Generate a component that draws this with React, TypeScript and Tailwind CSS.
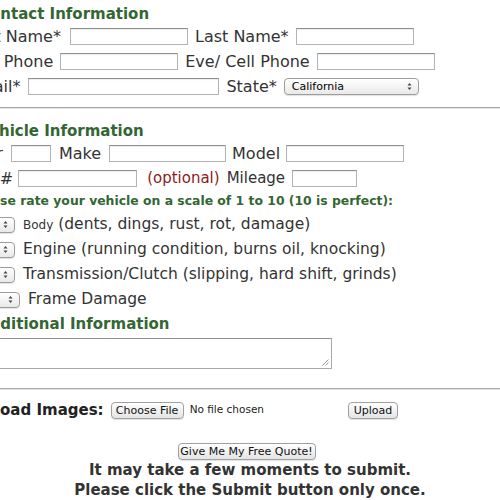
import clsx from "clsx";

function Field({ className }: { className: string }) {
  return <div className={clsx("h-[17px] shrink-0 border border-[#b4b4b4] border-t-[#8f8f8f] bg-white shadow-[inset_0_1px_1px_rgba(0,0,0,0.08)]", className)} />;
}

function Arrows() {
  return (
    <svg width="5" height="9" viewBox="0 0 5 9" className="shrink-0">
      <path d="M0.5 3.5L2.5 1L4.5 3.5Z" fill="#444" />
      <path d="M0.5 5.5L2.5 8L4.5 5.5Z" fill="#444" />
    </svg>
  );
}

function Select({ className, label }: { className: string; label?: string }) {
  return (
    <div className={clsx("flex shrink-0 items-center justify-between rounded-[4px] border border-[#9d9d9d] bg-gradient-to-b from-white to-[#e9e9e9] pl-[7px] pr-[6px] text-[11px] leading-none text-black shadow-[0_1px_1px_rgba(0,0,0,0.12)]", className)}>
      <span>{label}</span>
      <Arrows />
    </div>
  );
}

function Button({ className, children }: { className: string; children: React.ReactNode }) {
  return (
    <div className={clsx("flex h-[17px] shrink-0 items-center justify-center rounded-[4px] border border-[#a0a0a0] bg-gradient-to-b from-white to-[#e4e4e4] text-[11px] leading-none text-[#111] shadow-[0_1px_1px_rgba(0,0,0,0.12)]", className)}>
      {children}
    </div>
  );
}

function Divider() {
  return <div className="h-[2px] border-t border-[#a9a9a9] border-b border-b-[#e3e3e3]" />;
}

export default function App() {
  return (
    <div className="h-[500px] w-[500px] overflow-hidden bg-white font-['DejaVu_Sans',Verdana,sans-serif] text-[#333]">
      <div className="-ml-[33px] w-[566px]">
        <div className="flex h-[24px] items-center pl-[12px] pt-[4px] text-[15px] font-bold text-[#336633]">Contact Information</div>

        <div className="flex h-[25px] items-center text-[16px]">
          <span>First Name*</span>
          <Field className="ml-[9px] w-[118px]" />
          <span className="ml-[7px]">Last Name*</span>
          <Field className="ml-[7px] w-[118px]" />
        </div>
        <div className="flex h-[25px] items-center text-[16px]">
          <span>Day Phone</span>
          <Field className="ml-[7px] w-[118px]" />
          <span className="ml-[7px]">Eve/ Cell Phone</span>
          <Field className="ml-[7px] w-[118px]" />
        </div>
        <div className="flex h-[25px] items-center pl-[1px] text-[16px]">
          <span>Email*</span>
          <Field className="ml-[8px] w-[191px]" />
          <span className="ml-[7px]">State*</span>
          <Select className="ml-[7px] h-[17px] w-[135px]" label="California" />
        </div>

        <div className="mt-[8px]">
          <Divider />
        </div>

        <div className="mt-[12px] flex h-[20px] items-center pl-[11px] text-[15px] font-bold text-[#336633]">Vehicle Information</div>
        <div className="flex h-[25px] items-center pl-[2px] text-[16px]">
          <span>Year</span>
          <Field className="ml-[8px] w-[40px]" />
          <span className="ml-[8px]">Make</span>
          <Field className="ml-[8px] w-[117px]" />
          <span className="ml-[6px]">Model</span>
          <Field className="ml-[6px] w-[118px]" />
        </div>
        <div className="flex h-[25px] items-center text-[16px]">
          <span>VIN #</span>
          <Field className="ml-[5px] w-[119px]" />
          <span className="ml-[10px] text-[15px] text-[#8b1c1c]">(optional)</span>
          <span className="ml-[7px] text-[15px]">Mileage</span>
          <Field className="ml-[7px] w-[65px]" />
        </div>
        <div className="flex h-[21px] items-center pl-[3px] text-[12.4px] font-bold text-[#336633]">
          Please rate your vehicle on a scale of 1 to 10 (10 is perfect):
        </div>

        <div className="flex h-[25px] items-center gap-[8px] pl-[8px] text-[15.5px]">
          <Select className="h-[16px] w-[40px]" />
          <span>
            <span className="text-[12px]">Body</span> (dents, dings, rust, rot, damage)
          </span>
        </div>
        <div className="flex h-[25px] items-center gap-[8px] pl-[8px] text-[15.5px]">
          <Select className="h-[16px] w-[40px]" />
          <span>Engine (running condition, burns oil, knocking)</span>
        </div>
        <div className="flex h-[25px] items-center gap-[8px] pl-[8px] text-[15.5px]">
          <Select className="h-[16px] w-[40px]" />
          <span>Transmission/Clutch (slipping, hard shift, grinds)</span>
        </div>
        <div className="flex h-[25px] items-center gap-[8px] pl-[8px] text-[15.5px]">
          <Select className="h-[16px] w-[45px]" />
          <span>Frame Damage</span>
        </div>

        <div className="flex h-[25px] items-center pl-[11px] text-[15px] font-bold text-[#336633]">Additional Information</div>
        <div className="mt-[1px] pl-[3px]">
          <div className="relative h-[31px] w-[362px] border border-[#a9a9a9] border-t-[#8f8f8f] bg-white">
            <svg width="7" height="7" viewBox="0 0 7 7" className="absolute bottom-[2px] right-[2px]">
              <path d="M6.5 0.5L0.5 6.5M6.5 3.5L3.5 6.5" stroke="#999" strokeWidth="1" />
            </svg>
          </div>
        </div>

        <div className="mt-[19px]">
          <Divider />
        </div>

        <div className="mt-[8px] flex h-[24px] items-center pl-[5px]">
          <span className="text-[15px] font-bold text-[#222]">Upload Images:</span>
          <Button className="ml-[7px] w-[73px]">Choose File</Button>
          <span className="ml-[6px] text-[10.5px] text-[#222]">No file chosen</span>
          <Button className="ml-[84px] w-[50px]">Upload</Button>
        </div>

        <div className="mt-[21px] flex justify-center">
          <Button className="mr-[7px] w-[138px]">Give Me My Free Quote!</Button>
        </div>
        <div className="text-center text-[15px] font-bold leading-[20px] text-[#333]">
          <p>It may take a few moments to submit.</p>
          <p>Please click the Submit button only once.</p>
        </div>
      </div>
    </div>
  );
}
